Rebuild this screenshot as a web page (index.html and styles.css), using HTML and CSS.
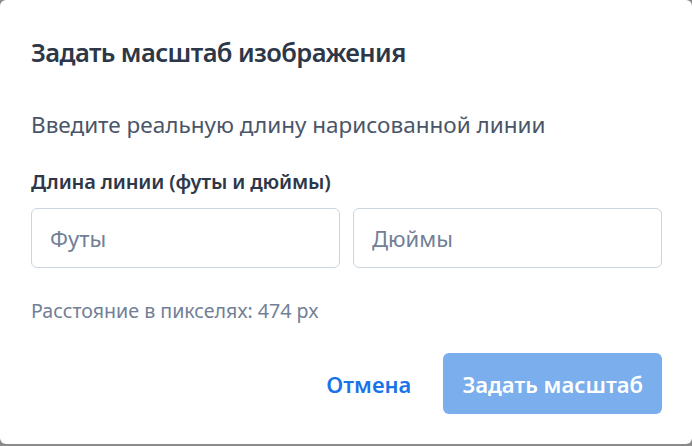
FILE: index.html
```html
<!DOCTYPE html>
<html lang="ru">
<head>
<meta charset="utf-8">
<title>Задать масштаб изображения</title>
<link rel="stylesheet" href="styles.css">
</head>
<body>
<div class="dialog">
  <h2 class="title">Задать масштаб изображения</h2>
  <p class="desc">Введите реальную длину нарисованной линии</p>
  <label class="label">Длина линии (футы и дюймы)</label>
  <div class="inputs">
    <input class="field" type="text" placeholder="Футы">
    <input class="field" type="text" placeholder="Дюймы">
  </div>
  <p class="helper">Расстояние в пикселях: 474 px</p>
  <div class="footer">
    <button class="btn btn-cancel" type="button">Отмена</button>
    <button class="btn btn-primary" type="button">Задать масштаб</button>
  </div>
</div>
</body>
</html>
```

FILE: styles.css
```css
html, body {
  margin: 0;
  padding: 0;
}
body {
  width: 692px;
  height: 446px;
  background: #8a8a8a;
  font-family: "Noto Sans", "Open Sans", sans-serif;
  overflow: hidden;
}
.dialog {
  box-sizing: border-box;
  width: 692px;
  height: 444px;
  background: #ffffff;
  border-radius: 6px;
  padding: 34px 30px 0 31px;
  display: flex;
  flex-direction: column;
}
.title {
  margin: 0;
  font-size: 25.5px;
  line-height: 36px;
  font-weight: 600;
  letter-spacing: -0.6px;
  color: #2d3748;
}
.desc {
  margin: 39px 0 0;
  font-size: 22.5px;
  line-height: 32px;
  color: #4a5568;
}
.label {
  display: block;
  margin-top: 27px;
  font-size: 20px;
  line-height: 28px;
  font-weight: 600;
  letter-spacing: -0.15px;
  color: #2d3748;
}
.inputs {
  margin-top: 12px;
  display: flex;
  gap: 13px;
}
.field {
  flex: 1;
  min-width: 0;
  box-sizing: border-box;
  height: 60px;
  border: 1px solid #cbd5e0;
  border-radius: 6px;
  padding: 0 18px;
  font-family: inherit;
  font-size: 22px;
  color: #2d3748;
  background: #fff;
  outline: none;
}
.field::placeholder {
  color: #718096;
}
.helper {
  margin: 30px 0 0;
  font-size: 19.6px;
  line-height: 26px;
  color: #718096;
}
.footer {
  margin-top: 29px;
  display: flex;
  justify-content: flex-end;
  gap: 12px;
}
.btn {
  height: 61px;
  border: none;
  border-radius: 6px;
  font-family: inherit;
  font-size: 22px;
  font-weight: 600;
  padding: 0 19px;
  cursor: pointer;
}
.btn-cancel {
  background: transparent;
  color: #1a73e8;
  padding: 0 20px;
}
.btn-primary {
  background: #7aaeec;
  color: #ffffff;
}
```
